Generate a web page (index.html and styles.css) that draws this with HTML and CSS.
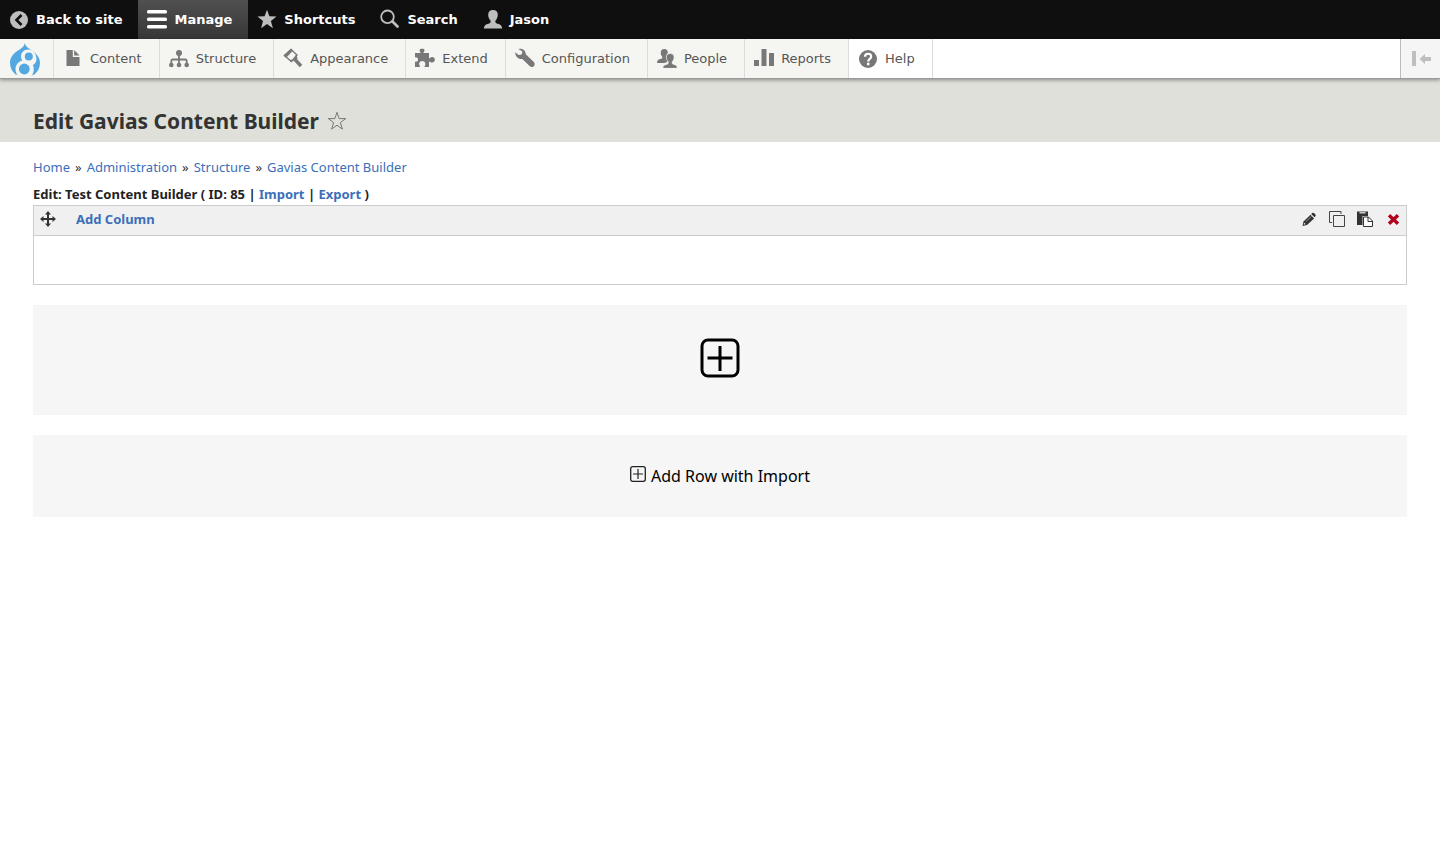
FILE: index.html
```html
<!DOCTYPE html>
<html lang="en">
<head>
<meta charset="utf-8">
<meta name="viewport" content="width=device-width, initial-scale=1">
<title>Edit Gavias Content Builder</title>
<link rel="stylesheet" href="styles.css">
</head>
<body>
<nav class="bar" aria-label="Toolbar">
  <a class="bar-item" href="#"><svg class="icon" viewBox="0 0 20 20"><circle cx="10" cy="11" r="9"/><path d="M12.500 6 7.500 11l5 5" fill="none" stroke="#0f0f0f" stroke-width="2.600"/></svg>Back to site</a>
  <a class="bar-item active" href="#"><svg class="icon" viewBox="0 0 20 20"><rect y="1" width="20" height="3.500" rx="1.500"/><rect y="8.500" width="20" height="3.500" rx="1.500"/><rect y="16" width="20" height="3.500" rx="1.500"/></svg>Manage</a>
  <a class="bar-item" href="#"><svg class="icon" viewBox="0 0 20 20"><path d="M10 .800l2.400 6.400 7.100.3-5.600 4.500 2 7.200-5.900-4.200-5.900 4.200L6 12 .500 7.500l7.100-.3z"/></svg>Shortcuts</a>
  <a class="bar-item" href="#"><svg class="icon" viewBox="0 0 20 20"><circle cx="7.500" cy="7.800" r="6.300" fill="none" stroke="#bebebe" stroke-width="1.800"/><path d="M12.500 12.500l5 5" fill="none" stroke="#bebebe" stroke-width="2.800" stroke-linecap="round"/></svg>Search</a>
  <a class="bar-item" href="#"><svg class="icon" viewBox="0 0 20 20"><path d="M10 1c3.200 0 4.800 2 4.800 4.800 0 2.600-1 4.400-2.300 5.700-.4 1.900.2 2.800 2 3.200 2.600.5 4.300 1.500 4.700 4.800H.8c.4-3.300 2.100-4.300 4.700-4.800 1.800-.4 2.400-1.300 2-3.200-1.300-1.300-2.300-3.100-2.300-5.700C5.200 3 6.800 1 10 1z"/></svg>Jason</a>
</nav>

<nav class="tray" aria-label="Administration menu">
  <a class="logo" href="#" aria-label="Drupal"><svg viewBox="0 0 30 34"><path d="M14.500 0c1 3.600 4.300 5.200 7 7.200C26.500 10.600 30 14.400 30 19.800c0 5-2.200 9-5.300 11.500-2.100 1.700-4.500 2.500-9.700 2.500s-7.600-.8-9.700-2.500C2.200 28.800 0 24.800 0 19.800c0-5.200 3.300-8.900 7.200-11.700C10.700 5.800 14.300 4 14.500 0z" fill="#53a8e2"/><path d="M18.500 6.500c-4.500 0-7.500 2.800-7.500 6.800 0 1.500.4 2.900 1.200 4.100C8.200 18.500 5.500 22 5.500 26c0 2.500 1 5 2.500 7l2 1h10l2-2c1.300-1.800 1.800-3.600 1.800-5.800 0-1.600-.3-3-.9-4.200 2.400-1.200 3.600-3.500 3.600-6 0-5-3.400-9.500-8-9.500z" fill="#f5f5f2"/><circle cx="18.800" cy="13.500" r="4" fill="#53a8e2"/><circle cx="14.300" cy="26" r="5.400" fill="#53a8e2"/><path d="M6 31.500c5 2.600 12.500 2.600 17.500 0l-2 2.500H8z" fill="#f5f5f2"/></svg></a>
  <a class="tray-item" href="#"><svg class="icon" viewBox="0 0 20 20"><path d="M3.500 2h6.300v7h6.700v9h-13z"/><path d="M11.200 2l5.300 5.500h-5.300z"/></svg>Content</a>
  <a class="tray-item" href="#"><svg class="icon" viewBox="0 0 20 20"><circle cx="10" cy="5" r="3"/><circle cx="2.300" cy="17" r="2.300"/><circle cx="10" cy="17" r="2.300"/><circle cx="17.700" cy="17" r="2.300"/><path d="M10 6v10M2.300 16v-3q0-1.500 1.500-1.500h12.400q1.500 0 1.500 1.500v3" fill="none" stroke="#787878" stroke-width="1.800"/></svg>Structure</a>
  <a class="tray-item" href="#"><svg class="icon" viewBox="0 0 20 20"><path d="M8 1.500l6 5.500-5.500 6.500-7-5.700z" fill="none" stroke="#787878" stroke-width="1.400"/><path d="M8.200.800L10 2.400l-6.500 7L.500 7.200zM13.500 6l1 5-3.500 1-3 2.200-1.500-1.700 4-1.500z"/><path d="M11 10.500l7 7.500" stroke="#787878" stroke-width="3.400"/></svg>Appearance</a>
  <a class="tray-item" href="#"><svg class="icon" viewBox="0 0 20 20"><path d="M0 5h5.800c-.5-1.200-1.200-1.600-1.200-2.800C4.600.3 9.500.3 9.500 2.200c0 1.200-.8 1.600-1.200 2.800H14v5.500c1.200-.2 1.500-1.400 3-1.400 3.800 0 3.800 5.400 0 5.400-1.500 0-1.800-1-3-1.100V19H9.600c-.2-1.300.8-1.700.8-3 0-4-6.300-4-6.300 0 0 1.300 1.100 1.700.9 3H0v-5.500c1.500.8 3-.2 3-2s-1.500-2.800-3-2z"/></svg>Extend</a>
  <a class="tray-item" href="#"><svg class="icon" viewBox="0 0 20 20"><path d="M3.500 1C6.500.2 10.600 2 10.800 6.200l8 7.800c2.700 3-1.300 6.900-4.200 4l-7.300-7C3.400 11.500.3 8.500.1 4.200l3.500 2.900 3.100-.7.700-2.800z"/></svg>Configuration</a>
  <a class="tray-item" href="#"><svg class="icon" viewBox="0 -1 20 20"><path d="M7.300 0c2.700 0 3.700 2 3.500 4-.9 1-1.500 2.200-1.300 4 .2 1.900.7 3 1.400 4-1.200 1-2.300 2-4 2H0c.2-3 1.500-3.500 3.600-3.900 1.600-.4 2-1 1.500-2.600C3.900 6 3.600 4.500 3.800 3 4 1 5.300 0 7.300 0z"/><path d="M13.200 4.500c2.700 0 3.900 1.600 3.900 3.800 0 1.900-.8 3.300-1.800 4.400-.5 1.700.1 2.400 1.600 2.700 2 .4 3.200 1.200 3.500 4H5.700c.3-2.800 1.800-3.600 3.800-4 1.500-.3 2.100-1 1.600-2.700-1-1.100-1.800-2.500-1.800-4.400 0-2.200 1.400-3.800 3.900-3.800z" stroke="#f5f5f2" stroke-width=".7"/></svg>People</a>
  <a class="tray-item" href="#"><svg class="icon" viewBox="0 0 20 20"><path d="M0 12h5v6H0zM7.500 1h5v17h-5zM15 5h5v13h-5z"/></svg>Reports</a>
  <a class="tray-item help" href="#"><svg class="icon" viewBox="0 0 20 20"><circle cx="10" cy="11" r="9"/><path d="M7 8.700C7 4.800 13.200 4.800 13.200 8.500c0 2.500-3 2.300-3 5" fill="none" stroke="#fff" stroke-width="2.200"/><circle cx="10.200" cy="16" r="1.400" fill="#fff"/></svg>Help</a>
  <button class="collapse" type="button" aria-label="Vertical orientation"><svg class="icon" viewBox="0 0 20 20"><path d="M1 3h4v15H1zM8.500 11l5.500-5v3h6v4h-6v3z"/></svg></button>
</nav>

<header class="page-head">
  <h1>Edit Gavias Content Builder</h1>
  <button class="star" type="button" aria-label="Add to shortcuts"><svg viewBox="0 0 20 20"><path d="M10 1.300l2.100 6.300h6.600l-5.300 4 2 6.500L10 14.200l-5.400 3.900 2-6.500-5.300-4h6.600z" fill="none" stroke="#777870" stroke-width="1"/></svg></button>
</header>

<main class="content">
  <nav class="crumbs" aria-label="Breadcrumb"><a href="#">Home</a><span>»</span><a href="#">Administration</a><span>»</span><a href="#">Structure</a><span>»</span><a href="#">Gavias Content Builder</a></nav>
  <div class="edit-line">Edit: Test Content Builder ( ID: 85 | <a href="#">Import</a> | <a href="#">Export</a> )</div>
  <section class="row-box">
    <div class="row-head">
      <button class="tool" type="button" aria-label="Move row"><svg viewBox="0 0 16 16"><path d="M8 0l3 3.500H9V7h3.500V5L16 8l-3.500 3V9H9v3.500h2L8 16l-3-3.500h2V9H3.500v2L0 8l3.500-3v2H7V3.500H5z"/></svg></button>
      <a class="add-column" href="#">Add Column</a>
      <div class="tools">
        <button class="tool" type="button" aria-label="Edit row"><svg viewBox="0 0 16 16"><path d="M1.500 15l1-4.500 7-6.700 3.600 3.600L6 14z"/><path d="M10.200 3l1.100-1.100q.9-.6 1.700.2l1.400 1.500q.8.900 0 1.700L13.600 6.300z"/><path d="M5 10.500l5.500-5.300" stroke="#bbb" stroke-width=".7"/><path d="M3.300 11.700l1.500 1.500-1.700.4-.4-.4z" fill="#f0f0f0"/></svg></button>
        <button class="tool" type="button" aria-label="Duplicate row"><svg viewBox="0 0 16 16"><path d="M4.500 4.500h11v11h-11zM3 11.500H.5V.5H12V3" fill="none" stroke="#444" stroke-width="1"/></svg></button>
        <button class="tool" type="button" aria-label="Paste row"><svg viewBox="0 0 16 16"><path d="M0 .5h11V5H5.500v9H0z"/><path d="M2.500 1h6v1.500h-6z" fill="#ccc"/><path d="M6.500 6h5l4 4v5.500h-9z" fill="#fff" stroke="#333"/><path d="M11 6v4.500h4.500" fill="none" stroke="#333"/></svg></button>
        <button class="tool" type="button" aria-label="Delete row"><svg viewBox="0 0 16 16"><path d="M4 4.300l9 8.400M13 4.300L4 12.700" stroke="#b3001b" stroke-width="3.400"/></svg></button>
      </div>
    </div>
    <div class="row-body"></div>
  </section>
  <button class="add-row" type="button" aria-label="Add row"><svg class="plus-large" viewBox="0 0 40 40"><rect x="2" y="2" width="36" height="36" rx="6" fill="none" stroke="#000" stroke-width="3"/><path d="M20 8v25M7.500 20h25" stroke="#000" stroke-width="3"/></svg></button>
  <button class="import-row" type="button"><svg class="plus-small" viewBox="0 0 16 16"><rect x=".7" y=".7" width="14.600" height="14.600" rx="2" fill="none" stroke="#222" stroke-width="1.300"/><path d="M8 3v10M3 8h10" stroke="#222" stroke-width="1.200"/></svg>Add Row with Import</button>
</main>
</body>
</html>
```
FILE: styles.css
```css
* { box-sizing: border-box; }
body {
  margin: 0;
  background: #fff;
  color: #333;
  font: 13px/20px "Noto Sans", "Open Sans", sans-serif;
}
a { color: #3b6fb8; text-decoration: none; }
svg { display: block; flex: none; }
button { margin: 0; padding: 0; border: 0; background: none; font: inherit; color: inherit; cursor: pointer; }

.icon { width: 20px; height: 20px; margin-bottom: 1px; }
.bar, .tray {
  display: flex;
  height: 39px;
  font-family: Verdana, "DejaVu Sans", sans-serif;
}
.bar { background: #0f0f0f; }
.bar-item, .tray-item { display: flex; align-items: center; gap: 7px; white-space: nowrap; }
.bar-item {
  padding: 0 16px 0 9px;
  color: #fff;
  font-weight: bold;
}
.bar-item .icon { fill: #bebebe; }
.bar-item.active { background: linear-gradient(#505050, #363636); }
.bar-item.active .icon { fill: #fff; }

.tray {
  position: relative;
  background: #fff;
  box-shadow: 0 1px 0 #999, 0 2px 4px rgba(0, 0, 0, .4);
}
.logo, .tray-item { border-right: 1px solid #ddd; background: #f5f5f2; }
.logo { width: 54px; padding: 4px 0 0 10px; }
.logo svg { width: 30px; height: 34px; }
.tray-item { padding: 0 17px 0 9px; color: #565656; }
.tray-item .icon { fill: #787878; }
.tray-item.help { background: #fff; }
.collapse {
  display: flex;
  align-items: center;
  justify-content: center;
  width: 40px;
  margin-left: auto;
  border-left: 1px solid #bbb;
  background: #f5f5f5;
}
.collapse .icon { fill: #bfbfbf; }

.page-head {
  display: flex;
  align-items: center;
  gap: 8px;
  padding: 28px 33px 6px;
  background: #dfe0d9;
}
h1 { margin: 0; font-size: 21px; line-height: 30px; font-weight: 700; color: #333; }
.star svg { width: 20px; height: 20px; }

.content { padding: 15px 33px; }
.crumbs { display: flex; flex-wrap: wrap; gap: 5px; }
.edit-line { margin: 7px 0 1px; font-weight: 700; color: #222; }
.row-box { border: 1px solid #ccc; }
.row-head {
  display: flex;
  align-items: center;
  height: 30px;
  padding: 0 5px 3px 6px;
  border-bottom: 1px solid #ccc;
  background: #f0f0f0;
}
.add-column { margin-left: 20px; font-weight: 700; }
.tools { display: flex; gap: 12px; margin-left: auto; }
.tool svg { width: 16px; height: 16px; fill: #333; }
.row-body { min-height: 48px; }
.add-row, .import-row {
  display: flex;
  align-items: center;
  justify-content: center;
  width: 100%;
  margin-top: 20px;
  background: #f6f6f6;
  color: #000;
}
.add-row { padding: 33px 0 37px; }
.plus-large { width: 40px; height: 40px; }
.import-row { gap: 5px; padding: 29px 0; font-size: 16px; line-height: 24px; }
.plus-small { width: 16px; height: 16px; margin-bottom: 4px; }
```
